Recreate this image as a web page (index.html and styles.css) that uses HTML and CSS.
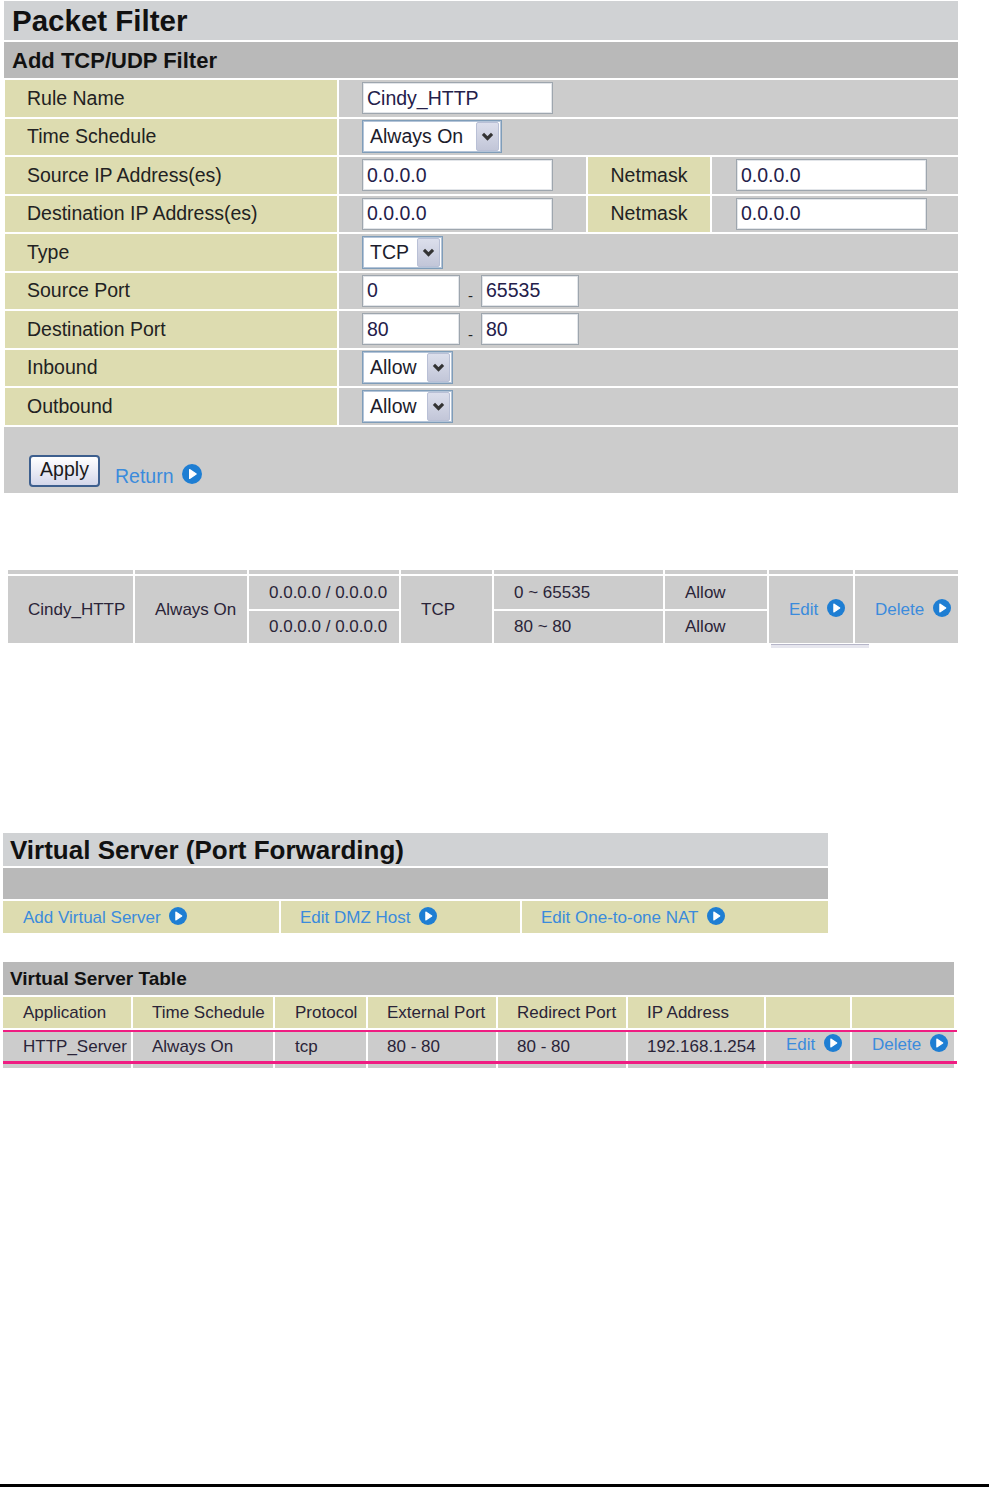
FILE: index.html
```html
<!DOCTYPE html>
<html lang="en">
  <head>
    <title>Packet Filter / Virtual Server</title>
    <meta charset="UTF-8" />
    <meta name="viewport" content="width=device-width" />
    <link rel="stylesheet" href="styles.css">
  </head>
  <body>
    <div class="page">

      <!-- packet filter form -->
      <section class="panel panel--filter">
        <h1 class="panel__title">Packet Filter</h1>
        <h2 class="panel__sub">Add TCP/UDP Filter</h2>
        <div class="form">
          <div class="form__label">Rule Name</div>
          <div class="form__value"><input class="field field--long" type="text" value="Cindy_HTTP"></div>

          <div class="form__label">Time Schedule</div>
          <div class="form__value">
            <span class="select select--schedule"><span class="select__text">Always On</span><span class="select__arrow"><svg viewBox="0 0 10 10"><path d="M1.5 3 L5 6.5 L8.5 3"/></svg></span></span>
          </div>

          <div class="form__label">Source IP Address(es)</div>
          <div class="form__value form__value--half"><input class="field field--long" type="text" value="0.0.0.0"></div>
          <div class="form__mask">Netmask</div>
          <div class="form__value form__value--mask"><input class="field field--long" type="text" value="0.0.0.0"></div>

          <div class="form__label">Destination IP Address(es)</div>
          <div class="form__value form__value--half"><input class="field field--long" type="text" value="0.0.0.0"></div>
          <div class="form__mask">Netmask</div>
          <div class="form__value form__value--mask"><input class="field field--long" type="text" value="0.0.0.0"></div>

          <div class="form__label">Type</div>
          <div class="form__value">
            <span class="select select--type"><span class="select__text">TCP</span><span class="select__arrow"><svg viewBox="0 0 10 10"><path d="M1.5 3 L5 6.5 L8.5 3"/></svg></span></span>
          </div>

          <div class="form__label">Source Port</div>
          <div class="form__value">
            <input class="field field--port" type="text" value="0"><span class="dash">-</span><input class="field field--port" type="text" value="65535">
          </div>

          <div class="form__label">Destination Port</div>
          <div class="form__value">
            <input class="field field--port" type="text" value="80"><span class="dash">-</span><input class="field field--port" type="text" value="80">
          </div>

          <div class="form__label">Inbound</div>
          <div class="form__value">
            <span class="select select--allow"><span class="select__text">Allow</span><span class="select__arrow"><svg viewBox="0 0 10 10"><path d="M1.5 3 L5 6.5 L8.5 3"/></svg></span></span>
          </div>

          <div class="form__label">Outbound</div>
          <div class="form__value">
            <span class="select select--allow"><span class="select__text">Allow</span><span class="select__arrow"><svg viewBox="0 0 10 10"><path d="M1.5 3 L5 6.5 L8.5 3"/></svg></span></span>
          </div>
        </div>
        <div class="actions">
          <button class="apply">Apply</button>
          <a class="link link--return" href="#">Return <svg class="go go--big" viewBox="0 0 20 20"><circle cx="10" cy="10" r="10"/><path d="M7.6 5.6 L14.2 10 L7.6 14.4 Z"/></svg></a>
        </div>
      </section>

      <!-- filter summary -->
      <div class="summary">
        <div class="summary__head"></div><div class="summary__head"></div><div class="summary__head"></div><div class="summary__head"></div>
        <div class="summary__head"></div><div class="summary__head"></div><div class="summary__head"></div><div class="summary__head"></div>

        <div class="summary__cell summary__cell--tall">Cindy_HTTP</div>
        <div class="summary__cell summary__cell--tall">Always On</div>
        <div class="summary__cell">0.0.0.0 / 0.0.0.0</div>
        <div class="summary__cell summary__cell--tall">TCP</div>
        <div class="summary__cell">0 ~ 65535</div>
        <div class="summary__cell">Allow</div>
        <div class="summary__cell summary__cell--tall"><a class="link" href="#">Edit <svg class="go" viewBox="0 0 20 20"><circle cx="10" cy="10" r="10"/><path d="M7.6 5.6 L14.2 10 L7.6 14.4 Z"/></svg></a></div>
        <div class="summary__cell summary__cell--tall"><a class="link" href="#">Delete <svg class="go" viewBox="0 0 20 20"><circle cx="10" cy="10" r="10"/><path d="M7.6 5.6 L14.2 10 L7.6 14.4 Z"/></svg></a></div>

        <div class="summary__cell">0.0.0.0 / 0.0.0.0</div>
        <div class="summary__cell">80 ~ 80</div>
        <div class="summary__cell">Allow</div>
      </div>
      <div class="summary__mark"></div>

      <!-- virtual server -->
      <section class="panel panel--vs">
        <h1 class="panel__title panel__title--vs">Virtual Server (Port Forwarding)</h1>
        <div class="panel__bar"></div>
        <div class="tabs">
          <div class="tabs__item"><a class="link" href="#">Add Virtual Server <svg class="go" viewBox="0 0 20 20"><circle cx="10" cy="10" r="10"/><path d="M7.6 5.6 L14.2 10 L7.6 14.4 Z"/></svg></a></div>
          <div class="tabs__item"><a class="link" href="#">Edit DMZ Host <svg class="go" viewBox="0 0 20 20"><circle cx="10" cy="10" r="10"/><path d="M7.6 5.6 L14.2 10 L7.6 14.4 Z"/></svg></a></div>
          <div class="tabs__item"><a class="link" href="#">Edit One-to-one NAT <svg class="go" viewBox="0 0 20 20"><circle cx="10" cy="10" r="10"/><path d="M7.6 5.6 L14.2 10 L7.6 14.4 Z"/></svg></a></div>
        </div>
      </section>

      <section class="panel panel--table">
        <h2 class="panel__sub panel__sub--table">Virtual Server Table</h2>
        <div class="vtable">
          <div class="vtable__head">Application</div>
          <div class="vtable__head">Time Schedule</div>
          <div class="vtable__head">Protocol</div>
          <div class="vtable__head">External Port</div>
          <div class="vtable__head">Redirect Port</div>
          <div class="vtable__head">IP Address</div>
          <div class="vtable__head"></div>
          <div class="vtable__head"></div>

          <div class="vtable__cell">HTTP_Server</div>
          <div class="vtable__cell">Always On</div>
          <div class="vtable__cell">tcp</div>
          <div class="vtable__cell">80 - 80</div>
          <div class="vtable__cell">80 - 80</div>
          <div class="vtable__cell">192.168.1.254</div>
          <div class="vtable__cell vtable__cell--link"><a class="link" href="#">Edit <svg class="go" viewBox="0 0 20 20"><circle cx="10" cy="10" r="10"/><path d="M7.6 5.6 L14.2 10 L7.6 14.4 Z"/></svg></a></div>
          <div class="vtable__cell vtable__cell--link"><a class="link" href="#">Delete <svg class="go" viewBox="0 0 20 20"><circle cx="10" cy="10" r="10"/><path d="M7.6 5.6 L14.2 10 L7.6 14.4 Z"/></svg></a></div>

          <div class="vtable__mark"></div>
        </div>
      </section>

      <div class="rule"></div>
    </div>
  </body>
</html>
```

FILE: styles.css
```css
body {
  margin: 0;
  font-family: "Liberation Sans", Arial, sans-serif;
  color: #222;
  background: #fff;
}

.page {
  min-height: 100vh;
  display: flex;
  flex-direction: column;
  box-sizing: border-box;
  padding-top: 1px;
}

/* panels */

.panel {
  display: flex;
  flex-direction: column;
  gap: 2px;
}
.panel--filter {
  margin-left: 4px;
  width: 954px;
}
.panel--vs {
  margin-top: 185px;
  margin-left: 3px;
  width: 825px;
}
.panel--table {
  margin-top: 29px;
  margin-left: 3px;
  width: 951px;
}

.panel__title {
  margin: 0;
  height: 39px;
  padding-left: 8px;
  background: #d0d2d4;
  color: #111;
  font-size: 29.5px;
  line-height: 40px;
  font-weight: bold;
}
.panel__title--vs {
  height: 33px;
  padding-left: 7px;
  font-size: 26px;
  line-height: 34px;
}

.panel__sub {
  margin: 0;
  height: 36px;
  padding-left: 8px;
  background: #b9b9b9;
  color: #111;
  font-size: 22px;
  line-height: 37px;
  font-weight: bold;
}
.panel__sub--table {
  height: 33px;
  padding-left: 7px;
  font-size: 19px;
  line-height: 33px;
}

.panel__bar {
  height: 31px;
  background: #b9b9b9;
}

/* form */

.form {
  display: grid;
  grid-template-columns: 332px 247px 122px 246px;
  grid-auto-rows: 36.5px;
  gap: 2px;
  margin-left: 1px;
}
.form__label {
  display: flex;
  align-items: center;
  padding-left: 22px;
  background: #dddcb0;
  font-size: 19.5px;
}
.form__value {
  grid-column: 2 / 5;
  display: flex;
  align-items: center;
  padding-left: 23px;
  background: #cccccc;
}
.form__value--half,
.form__value--mask {
  grid-column: auto;
}
.form__value--mask {
  padding-left: 24px;
}
.form__mask {
  display: flex;
  align-items: center;
  justify-content: center;
  background: #dddcb0;
  font-size: 19.5px;
}

.field {
  box-sizing: border-box;
  height: 32px;
  padding: 0 4px;
  border: 1px solid #9ea6ae;
  box-shadow: inset 0 0 0 1px #e2e5e9;
  background: #fff;
  color: #24204a;
  font-family: "Liberation Sans", Arial, sans-serif;
  font-size: 19.5px;
  outline: none;
}
.field--long {
  width: 191px;
}
.field--port {
  width: 98px;
}
.dash {
  width: 21px;
  text-align: center;
  font-size: 15px;
  padding-top: 10px;
}

.select {
  box-sizing: border-box;
  display: flex;
  align-items: center;
  height: 33px;
  border: 1px solid #7f9db9;
  box-shadow: inset 0 0 0 1px #b4c4d8;
  background: #fff;
  font-size: 19.5px;
  color: #1c1c2c;
}
.select--schedule {
  width: 140px;
}
.select--type {
  width: 81px;
}
.select--allow {
  width: 91px;
}
.select__text {
  flex: 1;
  padding-left: 7px;
}
.select__arrow {
  box-sizing: border-box;
  display: flex;
  align-items: center;
  justify-content: center;
  width: 23px;
  height: 29px;
  margin-right: 2px;
  border: 1px solid #b9c0d6;
  border-radius: 2px;
  background: linear-gradient(#dcdfec, #c2c6d8);
}
.select__arrow svg {
  width: 13px;
  height: 13px;
  fill: none;
  stroke: #333;
  stroke-width: 2.4;
}

.actions {
  height: 66px;
  box-sizing: border-box;
  display: flex;
  align-items: flex-end;
  padding: 0 0 6px 25px;
  background: #cccccc;
}
.apply {
  width: 71px;
  height: 32px;
  padding: 0 0 2px;
  border: 2px solid #3d5f8e;
  border-radius: 4px;
  background: linear-gradient(#ffffff, #e6e8f3 60%, #d3d7ea);
  color: #1a1a1a;
  font-family: "Liberation Sans", Arial, sans-serif;
  font-size: 19.5px;
}
.link--return {
  margin-left: 15px;
  font-size: 19.5px;
  line-height: 22px;
}

/* links and the blue go icon */

.link {
  color: #3b8bdc;
  text-decoration: none;
  white-space: nowrap;
}
.go {
  width: 18px;
  height: 18px;
  margin-left: 4px;
  vertical-align: -2px;
}
.go--big {
  width: 20px;
  height: 20px;
  margin-left: 3px;
  vertical-align: -1px;
}
.go circle {
  fill: #1e7ed3;
}
.go path {
  fill: #fff;
  stroke: #fff;
  stroke-width: 1.2;
  stroke-linejoin: round;
}

/* summary table */

.summary {
  display: grid;
  grid-template-columns: 125px 112px 150px 91px 169px 102px 84px 103px;
  grid-template-rows: 4px 33px 32px;
  gap: 2px;
  margin-top: 77.5px;
  margin-left: 8px;
  width: 950px;
}
.summary__head {
  background: #cccccc;
}
.summary__cell {
  display: flex;
  align-items: center;
  padding-left: 20px;
  background: #cccccc;
  font-size: 17px;
  color: #2a2438;
}
.summary__cell--tall {
  grid-row: span 2;
}
.summary__mark {
  margin: 1px 0 0 771px;
  width: 98px;
  height: 3px;
  border-top: 1px solid #b6b6c8;
  background: #e6e6ee;
}

/* virtual server links */

.tabs {
  display: grid;
  grid-template-columns: 276px 239px 306px;
  gap: 2px;
  height: 32px;
}
.tabs__item {
  display: flex;
  align-items: center;
  padding-left: 19px;
  background: #dddcb0;
  font-size: 17px;
}
.tabs__item:first-child {
  padding-left: 20px;
}

/* virtual server table */

.vtable {
  position: relative;
  display: grid;
  grid-template-columns: 128px 140px 91px 128px 128px 136px 84px 102px;
  grid-template-rows: 31px 38px;
  gap: 2px;
}
.vtable__head {
  display: flex;
  align-items: center;
  padding-left: 19px;
  background: #dddcb0;
  font-size: 17px;
  color: #2a2438;
}
.vtable__head:first-child,
.vtable__head:nth-child(3) {
  padding-left: 20px;
}
.vtable__cell {
  padding: 7px 0 0 19px;
  background: #cccccc;
  font-size: 17px;
  line-height: 20px;
  color: #2a2438;
}
.vtable__cell:nth-child(9),
.vtable__cell:nth-child(11) {
  padding-left: 20px;
}
.vtable__cell--link {
  padding-top: 4px;
  padding-left: 20px;
}
.vtable__mark {
  position: absolute;
  top: 33px;
  left: 0;
  right: -3px;
  height: 34px;
  box-sizing: border-box;
  border-top: 2px solid #ef1d82;
  border-bottom: 3px solid #ef1d82;
}

.rule {
  margin-top: auto;
  height: 3px;
  background: #000;
}
```
